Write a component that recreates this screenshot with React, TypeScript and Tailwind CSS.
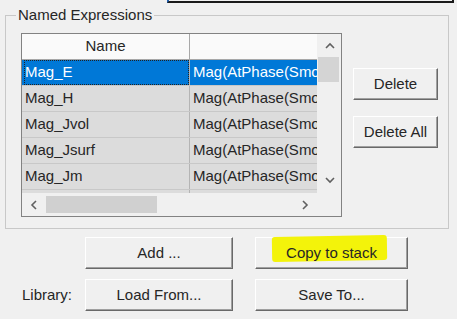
import React from 'react';

const rows = ['Mag_E', 'Mag_H', 'Mag_Jvol', 'Mag_Jsurf', 'Mag_Jm', 'Mag_B'];

const Btn = ({ label, className = '', children }: { label?: string; className?: string; children?: React.ReactNode }) => (
  <button
    className={`relative flex items-center justify-center bg-[#f0f0f0] border-t border-l border-t-white border-l-white border-b border-r border-b-[#696969] border-r-[#696969] shadow-[inset_-1px_-1px_0_#a0a0a0] text-[15px] text-[#262626] ${className}`}
  >
    {children ?? label}
  </button>
);

const Chevron = ({ dir }: { dir: 'up' | 'down' | 'left' | 'right' }) => {
  const d = {
    up: 'M1 6 L5 2 L9 6',
    down: 'M1 2 L5 6 L9 2',
    left: 'M6 1 L2 5 L6 9',
    right: 'M2 1 L6 5 L2 9',
  }[dir];
  const vertical = dir === 'up' || dir === 'down';
  return (
    <svg width={vertical ? 10 : 8} height={vertical ? 8 : 10} viewBox={vertical ? '0 0 10 8' : '0 0 8 10'}>
      <path d={d} fill="none" stroke="#606060" strokeWidth="1.6" />
    </svg>
  );
};

export default function App() {
  return (
    <div className="w-[457px] h-[319px] bg-[#f0f0f0] overflow-hidden font-['Liberation_Sans',Arial,sans-serif] text-[15px] text-[#262626]">
      {/* edge of a selection above */}
      <div className="ml-[167px] w-[287px] h-[3px] border-x-2 border-b-2 border-[#1a1a1a] border-l-[#1f5fb0]" />

      {/* Named Expressions group */}
      <div className="relative mt-[12px] ml-[5px] w-[444px] h-[214px] border border-[#c8c8c8]">
        <span className="absolute -top-[10px] left-[10px] px-[2px] bg-[#f0f0f0] leading-[18px]">
          Named Expressions
        </span>

        <div className="flex items-start pt-[17px] pl-[15px]">
          {/* list view */}
          <div className="w-[321px] h-[184px] border border-[#828282] bg-[#f0f0f0] flex flex-col">
            <div className="flex h-[159px]">
              <div className="w-[295px] overflow-hidden">
                <div className="flex h-[26px] bg-[#fafafa] border-b border-[#a8a8a8]">
                  <div className="w-[168px] border-r border-[#a8a8a8] flex items-center justify-center">Name</div>
                  <div className="flex-1" />
                </div>
                {rows.map((r, i) => {
                  const sel = i === 0;
                  return (
                    <div key={r} className="flex h-[26px] border-b border-[#c8c8c8]">
                      <div
                        className={`w-[168px] border-r border-[#b4b4b4] flex items-center pl-[2px] whitespace-nowrap ${
                          sel ? 'bg-[#0078d7] text-white' : 'bg-[#dcdcdc]'
                        }`}
                      >
                        <span
                          className={`flex items-center h-full w-full ${
                            sel ? 'border border-dotted border-[#222]' : 'pl-[1px]'
                          }`}
                        >
                          {r}
                        </span>
                      </div>
                      <div
                        className={`flex-1 flex items-center pl-[3px] whitespace-nowrap overflow-hidden ${
                          sel ? 'bg-[#0078d7] text-white' : 'bg-[#dcdcdc]'
                        }`}
                      >
                        Mag(AtPhase(Smooth(
                      </div>
                    </div>
                  );
                })}
              </div>
              {/* vertical scrollbar */}
              <div className="w-[24px] flex flex-col bg-[#f0f0f0]">
                <div className="h-[23px] flex items-center justify-center pl-[1px]">
                  <Chevron dir="up" />
                </div>
                <div className="h-[25px] ml-[1px] mr-[2px] bg-[#d4d4d4]" />
                <div className="flex-1" />
                <div className="h-[26px] flex items-center justify-center pl-[1px]">
                  <Chevron dir="down" />
                </div>
              </div>
            </div>
            {/* horizontal scrollbar */}
            <div className="h-[23px] flex items-center bg-[#f0f0f0]">
              <div className="w-[24px] flex items-center justify-center">
                <Chevron dir="left" />
              </div>
              <div className="w-[111px] h-[17px] bg-[#d0d0d0]" />
              <div className="flex-1" />
              <div className="w-[24px] mr-[24px] flex items-center justify-center">
                <Chevron dir="right" />
              </div>
            </div>
          </div>

          {/* side buttons */}
          <div className="ml-[11px] mt-[35px] flex flex-col gap-[16px]">
            <Btn label="Delete" className="w-[85px] h-[32px]" />
            <Btn label="Delete All" className="w-[85px] h-[32px]" />
          </div>
        </div>
      </div>

      {/* bottom buttons */}
      <div className="mt-[8px] flex flex-col gap-[10px]">
        <div className="flex items-center">
          <div className="w-[85px]" />
          <Btn label="Add ..." className="w-[148px] h-[32px]" />
          <div className="w-[22px]" />
          <Btn className="w-[153px] h-[32px]">
            <span className="absolute left-[16px] top-[-2px] w-[115px] h-[25px] bg-[#f3f30a] rounded-[3px] -rotate-1" />
            <span className="relative">Copy to stack</span>
          </Btn>
        </div>
        <div className="flex items-center">
          <div className="w-[85px] pl-[22px]">Library:</div>
          <Btn label="Load From..." className="w-[148px] h-[32px]" />
          <div className="w-[22px]" />
          <Btn label="Save To..." className="w-[153px] h-[32px]" />
        </div>
      </div>
    </div>
  );
}
